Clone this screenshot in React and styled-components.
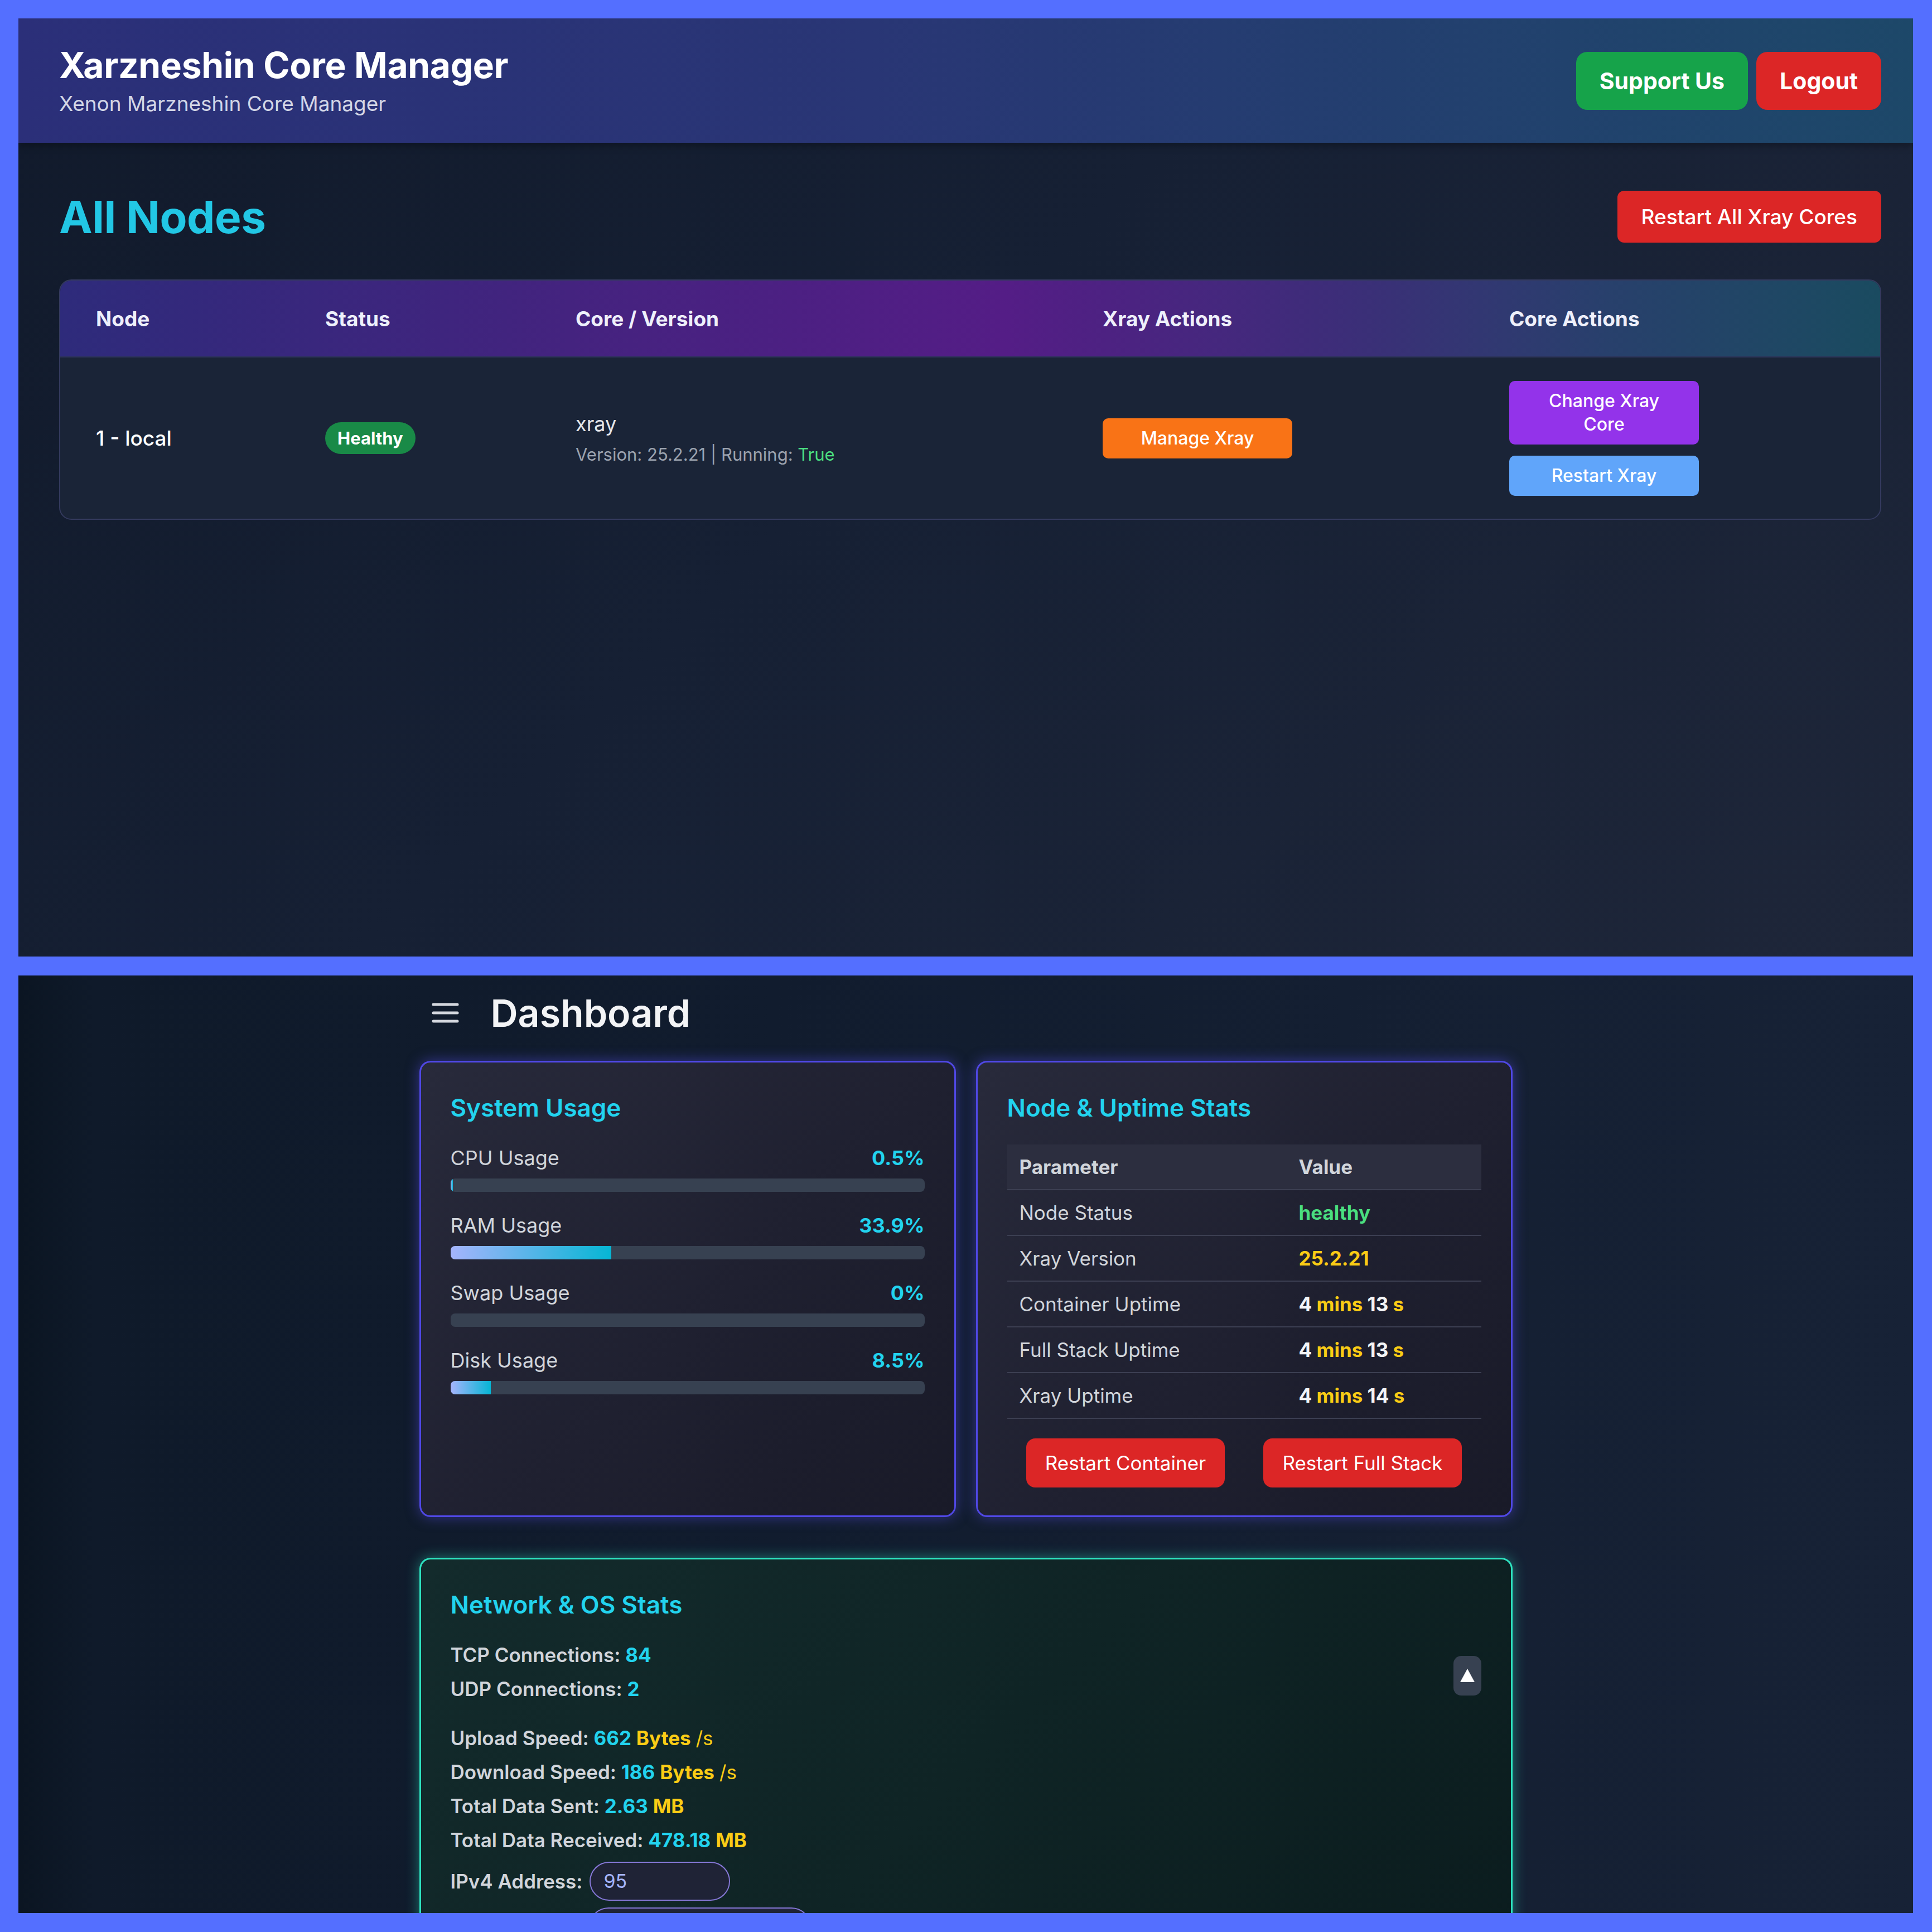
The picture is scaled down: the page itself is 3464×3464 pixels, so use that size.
import React from "react";
import styled, { createGlobalStyle } from "styled-components";

const GlobalStyle = createGlobalStyle`
  * { box-sizing: border-box; }
  html, body { margin: 0; padding: 0; background: #546fff; }
  body { font-family: Inter, "Noto Sans", "Liberation Sans", sans-serif; }
`;

const Canvas = styled.div`
  width: 3464px;
  height: 3464px;
  padding: 33px 34px 34px 33px;
  display: flex;
  flex-direction: column;
  gap: 34px;
  background: #546fff;
`;

const Screen = styled.section`
  flex: 1 1 0;
  min-height: 0;
  overflow: hidden;
  display: flex;
  flex-direction: column;
  background: ${(p) =>
    p.$variant === "dash"
      ? "linear-gradient(90deg, #0b1522 0%, #0f1a2a 4%, #111c2e 40%, #172236 100%)"
      : "linear-gradient(135deg, #111a2b 0%, #162034 45%, #1e2639 100%)"};
`;

/* ---------- top screen ---------- */

const TopBar = styled.header`
  flex: none;
  height: 223px;
  padding: 0 57px 0 73px;
  display: flex;
  align-items: center;
  justify-content: space-between;
  background: linear-gradient(90deg, #2b2f79 0%, #293675 45%, #1d4869 100%);
  box-shadow: 0 4px 14px rgba(0, 0, 0, 0.35);
`;

const Brand = styled.div`
  display: flex;
  flex-direction: column;
  gap: 9px;
`;

const BrandTitle = styled.h1`
  margin: 0;
  font-size: 64px;
  line-height: 74px;
  font-weight: 700;
  color: #ffffff;
  letter-spacing: -0.3px;
`;

const BrandSub = styled.p`
  margin: 0;
  font-size: 37px;
  line-height: 46px;
  color: #d3d6e6;
`;

const TopActions = styled.div`
  display: flex;
  gap: 15px;
`;

const PillButton = styled.button`
  height: 104px;
  padding: 0 42px;
  border: none;
  border-radius: 20px;
  font-family: inherit;
  font-size: 41px;
  font-weight: 700;
  color: #ffffff;
  background: ${(p) => (p.$tone === "green" ? "#16a34a" : "#dc2626")};
`;

const Main = styled.main`
  padding: 86px 57px 0 73px;
  display: flex;
  flex-direction: column;
  gap: 66px;
`;

const TitleRow = styled.div`
  height: 93px;
  display: flex;
  align-items: center;
  justify-content: space-between;
`;

const PageTitle = styled.h2`
  margin: 0;
  font-size: 80px;
  font-weight: 700;
  color: #22c7e5;
  letter-spacing: -0.5px;
`;

const DangerButton = styled.button`
  height: 93px;
  padding: 0 43px;
  border: none;
  border-radius: 12px;
  font-family: inherit;
  font-size: 37px;
  font-weight: 500;
  color: #ffffff;
  background: #dc2626;
`;

const NodeTable = styled.div`
  border: 2px solid #343a5e;
  border-radius: 22px;
  overflow: hidden;
  background: #1a2437;
`;

const TableRow = styled.div`
  display: grid;
  grid-template-columns: 411px 449px 945px 729px 1fr;
  padding-left: 64px;
  align-items: center;
  height: ${(p) => (p.$head ? "138px" : "289px")};
  background: ${(p) =>
    p.$head
      ? "linear-gradient(90deg, #2e2b7b 0%, #44237f 28%, #541d86 52%, #3d2d79 70%, #28406c 85%, #1a4b60 100%)"
      : "transparent"};
  border-bottom: ${(p) => (p.$head ? "2px solid #2c3358" : "none")};
`;

const HeadCell = styled.div`
  font-size: 37px;
  font-weight: 700;
  color: #eef0fb;
`;

const NodeName = styled.div`
  font-size: 37px;
  font-weight: 500;
  color: #ffffff;
`;

const StatusBadge = styled.span`
  display: inline-flex;
  align-items: center;
  height: 57px;
  padding: 0 22px;
  border-radius: 999px;
  background: #198a47;
  color: #ffffff;
  font-size: 31px;
  font-weight: 700;
`;

const CoreInfo = styled.div`
  display: flex;
  flex-direction: column;
  gap: 14px;
`;

const CoreName = styled.div`
  font-size: 36px;
  color: #e5e7eb;
`;

const CoreMeta = styled.div`
  font-size: 31px;
  color: #9ca3af;
`;

const Good = styled.span`
  color: #4ade80;
`;

const ActionStack = styled.div`
  display: flex;
  flex-direction: column;
  gap: 20px;
  align-items: flex-start;
`;

const ActionButton = styled.button`
  width: 340px;
  padding: 15px 48px;
  border: none;
  border-radius: 10px;
  font-family: inherit;
  font-size: 32px;
  line-height: 42px;
  font-weight: 500;
  color: #ffffff;
  background: ${(p) =>
    ({ orange: "#f97316", purple: "#9333ea", blue: "#60a5fa" }[p.$tone])};
`;

/* ---------- dashboard screen ---------- */

const DashWrap = styled.div`
  width: 1960px;
  margin: 0 auto;
  display: flex;
  flex-direction: column;
`;

const DashHeader = styled.div`
  height: 80px;
  margin-top: 27px;
  padding-left: 22px;
  display: flex;
  align-items: center;
  gap: 57px;
`;

const DashTitle = styled.h2`
  margin: 0;
  font-size: 68px;
  font-weight: 600;
  color: #f3f4f6;
`;

const CardGrid = styled.div`
  display: grid;
  grid-template-columns: 1fr 1fr;
  gap: 36px;
  margin-top: 46px;
`;

const Card = styled.div`
  position: relative;
  border: 3px solid ${(p) => (p.$accent === "teal" ? "#2ee3c0" : "#5048e5")};
  border-radius: 20px;
  padding: 53px 53px 50px 53px;
  margin-top: ${(p) => (p.$gapTop ? "73px" : "0")};
  background: ${(p) =>
    p.$accent === "teal"
      ? "linear-gradient(135deg, #132b2c 0%, #0f2425 50%, #0b1c1e 100%)"
      : "linear-gradient(135deg, #282a3b 0%, #1f2030 55%, #191a28 100%)"};
  box-shadow: ${(p) =>
    p.$accent === "teal"
      ? "0 0 24px rgba(46, 227, 192, 0.45)"
      : "0 0 24px rgba(88, 80, 236, 0.5)"};
`;

const CardTitle = styled.h3`
  margin: 0;
  font-size: 44px;
  line-height: 56px;
  font-weight: 600;
  color: #22d3ee;
`;

const UsageList = styled.div`
  margin-top: 40px;
  display: flex;
  flex-direction: column;
  gap: 38px;
`;

const UsageItem = styled.div`
  display: flex;
  flex-direction: column;
  gap: 15px;
`;

const UsageHead = styled.div`
  display: flex;
  justify-content: space-between;
  font-size: 36px;
  line-height: 44px;
`;

const UsageLabel = styled.span`
  color: #d1d5db;
`;

const UsageValue = styled.span`
  color: #22d3ee;
  font-weight: 700;
`;

const Track = styled.div`
  height: 24px;
  border-radius: 8px;
  background: #374151;
  overflow: hidden;
`;

const Fill = styled.div`
  height: 100%;
  background: linear-gradient(90deg, #a5b4fc 0%, #06b6d4 100%);
`;

const StatTable = styled.div`
  margin-top: 38px;
  display: flex;
  flex-direction: column;
`;

const StatRow = styled.div`
  display: grid;
  grid-template-columns: 501px 1fr;
  align-items: center;
  height: 82px;
  padding-left: 22px;
  border-bottom: 2px solid #3c3f52;
  background: ${(p) => (p.$head ? "#2c2e3f" : "transparent")};
  font-size: 35px;
  font-weight: ${(p) => (p.$head ? 700 : 400)};
  color: #d1d5db;
`;

const Val = styled.span`
  font-weight: 700;
  color: ${(p) =>
    ({ green: "#4ade80", yellow: "#facc15", white: "#f3f4f6", cyan: "#22d3ee" }[
      p.$c
    ])};
`;

const ButtonPair = styled.div`
  margin-top: 35px;
  display: grid;
  grid-template-columns: 1fr 1fr;
  justify-items: center;
`;

const RedButton = styled.button`
  height: 88px;
  padding: 0 34px;
  border: none;
  border-radius: 16px;
  font-family: inherit;
  font-size: 35px;
  color: #ffffff;
  background: #dc2626;
`;

const NetBody = styled.div`
  margin-top: 32px;
  display: flex;
  justify-content: space-between;
  align-items: flex-start;
`;

const StatGroup = styled.div`
  display: flex;
  flex-direction: column;
  margin-bottom: ${(p) => (p.$spaced ? "27px" : "0")};
`;

const StatLine = styled.div`
  font-size: 35px;
  line-height: 61px;
  font-weight: 600;
  color: #d1d5db;
  white-space: nowrap;
`;

const Unit = styled.span`
  color: #facc15;
  font-weight: ${(p) => (p.$light ? 400 : 700)};
`;

const FieldRow = styled.div`
  display: flex;
  align-items: center;
  gap: 12px;
  margin-top: ${(p) => (p.$first ? "8px" : "12px")};
  font-size: 35px;
  font-weight: 600;
  color: #d1d5db;
`;

const Field = styled.input`
  width: ${(p) => p.$w}px;
  height: 70px;
  padding: 0 24px;
  border: 2px solid #8577d6;
  border-radius: 35px;
  background: #1f2336;
  color: #a5b4fc;
  font-family: inherit;
  font-size: 34px;
  outline: none;
`;

const Toggle = styled.button`
  width: 50px;
  height: 71px;
  margin-top: 32px;
  border: none;
  border-radius: 14px;
  background: #374151;
  padding: 0;
  display: flex;
  align-items: center;
  justify-content: center;
`;

const MenuIcon = () => (
  <svg width="49" height="38" viewBox="0 0 49 38">
    <g stroke="#d4d7de" strokeWidth="5" strokeLinecap="round">
      <line x1="3" y1="4" x2="46" y2="4" />
      <line x1="3" y1="19" x2="46" y2="19" />
      <line x1="3" y1="34" x2="46" y2="34" />
    </g>
  </svg>
);

const UpArrow = () => (
  <svg width="28" height="26" viewBox="0 0 28 26">
    <polygon points="14,1 27,25 1,25" fill="#ffffff" />
  </svg>
);

const usage = [
  { label: "CPU Usage", value: 0.5, text: "0.5%" },
  { label: "RAM Usage", value: 33.9, text: "33.9%" },
  { label: "Swap Usage", value: 0, text: "0%" },
  { label: "Disk Usage", value: 8.5, text: "8.5%" },
];

const Uptime = ({ m, s }) => (
  <span>
    <Val $c="white">{m} </Val>
    <Val $c="yellow">mins</Val>
    <Val $c="white"> {s} </Val>
    <Val $c="yellow">s</Val>
  </span>
);

export default function App() {
  return (
    <>
      <GlobalStyle />
      <Canvas>
        <Screen>
          <TopBar>
            <Brand>
              <BrandTitle>Xarzneshin Core Manager</BrandTitle>
              <BrandSub>Xenon Marzneshin Core Manager</BrandSub>
            </Brand>
            <TopActions>
              <PillButton $tone="green">Support Us</PillButton>
              <PillButton $tone="red">Logout</PillButton>
            </TopActions>
          </TopBar>
          <Main>
            <TitleRow>
              <PageTitle>All Nodes</PageTitle>
              <DangerButton>Restart All Xray Cores</DangerButton>
            </TitleRow>
            <NodeTable>
              <TableRow $head>
                <HeadCell>Node</HeadCell>
                <HeadCell>Status</HeadCell>
                <HeadCell>Core / Version</HeadCell>
                <HeadCell>Xray Actions</HeadCell>
                <HeadCell>Core Actions</HeadCell>
              </TableRow>
              <TableRow>
                <NodeName>1 - local</NodeName>
                <div>
                  <StatusBadge>Healthy</StatusBadge>
                </div>
                <CoreInfo>
                  <CoreName>xray</CoreName>
                  <CoreMeta>
                    Version: 25.2.21 | Running: <Good>True</Good>
                  </CoreMeta>
                </CoreInfo>
                <div>
                  <ActionButton $tone="orange">Manage Xray</ActionButton>
                </div>
                <ActionStack>
                  <ActionButton $tone="purple">Change Xray Core</ActionButton>
                  <ActionButton $tone="blue">Restart Xray</ActionButton>
                </ActionStack>
              </TableRow>
            </NodeTable>
          </Main>
        </Screen>

        <Screen $variant="dash">
          <DashWrap>
            <DashHeader>
              <MenuIcon />
              <DashTitle>Dashboard</DashTitle>
            </DashHeader>
            <CardGrid>
              <Card>
                <CardTitle>System Usage</CardTitle>
                <UsageList>
                  {usage.map((u) => (
                    <UsageItem key={u.label}>
                      <UsageHead>
                        <UsageLabel>{u.label}</UsageLabel>
                        <UsageValue>{u.text}</UsageValue>
                      </UsageHead>
                      <Track>
                        <Fill style={{ width: `${u.value}%` }} />
                      </Track>
                    </UsageItem>
                  ))}
                </UsageList>
              </Card>
              <Card>
                <CardTitle>Node &amp; Uptime Stats</CardTitle>
                <StatTable>
                  <StatRow $head>
                    <span>Parameter</span>
                    <span>Value</span>
                  </StatRow>
                  <StatRow>
                    <span>Node Status</span>
                    <Val $c="green">healthy</Val>
                  </StatRow>
                  <StatRow>
                    <span>Xray Version</span>
                    <Val $c="yellow">25.2.21</Val>
                  </StatRow>
                  <StatRow>
                    <span>Container Uptime</span>
                    <Uptime m="4" s="13" />
                  </StatRow>
                  <StatRow>
                    <span>Full Stack Uptime</span>
                    <Uptime m="4" s="13" />
                  </StatRow>
                  <StatRow>
                    <span>Xray Uptime</span>
                    <Uptime m="4" s="14" />
                  </StatRow>
                </StatTable>
                <ButtonPair>
                  <RedButton>Restart Container</RedButton>
                  <RedButton>Restart Full Stack</RedButton>
                </ButtonPair>
              </Card>
            </CardGrid>
            <Card $accent="teal" $gapTop>
              <CardTitle>Network &amp; OS Stats</CardTitle>
              <NetBody>
                <div>
                  <StatGroup $spaced>
                    <StatLine>
                      TCP Connections: <Val $c="cyan">84</Val>
                    </StatLine>
                    <StatLine>
                      UDP Connections: <Val $c="cyan">2</Val>
                    </StatLine>
                  </StatGroup>
                  <StatGroup>
                    <StatLine>
                      Upload Speed: <Val $c="cyan">662</Val> <Unit>Bytes</Unit>{" "}
                      <Unit $light>/s</Unit>
                    </StatLine>
                    <StatLine>
                      Download Speed: <Val $c="cyan">186</Val> <Unit>Bytes</Unit>{" "}
                      <Unit $light>/s</Unit>
                    </StatLine>
                    <StatLine>
                      Total Data Sent: <Val $c="cyan">2.63</Val> <Unit>MB</Unit>
                    </StatLine>
                    <StatLine>
                      Total Data Received: <Val $c="cyan">478.18</Val> <Unit>MB</Unit>
                    </StatLine>
                  </StatGroup>
                  <FieldRow $first>
                    IPv4 Address: <Field $w={252} defaultValue="95" readOnly />
                  </FieldRow>
                  <FieldRow>
                    IPv6 Address: <Field $w={398} defaultValue="" readOnly />
                  </FieldRow>
                </div>
                <Toggle>
                  <UpArrow />
                </Toggle>
              </NetBody>
            </Card>
          </DashWrap>
        </Screen>
      </Canvas>
    </>
  );
}
